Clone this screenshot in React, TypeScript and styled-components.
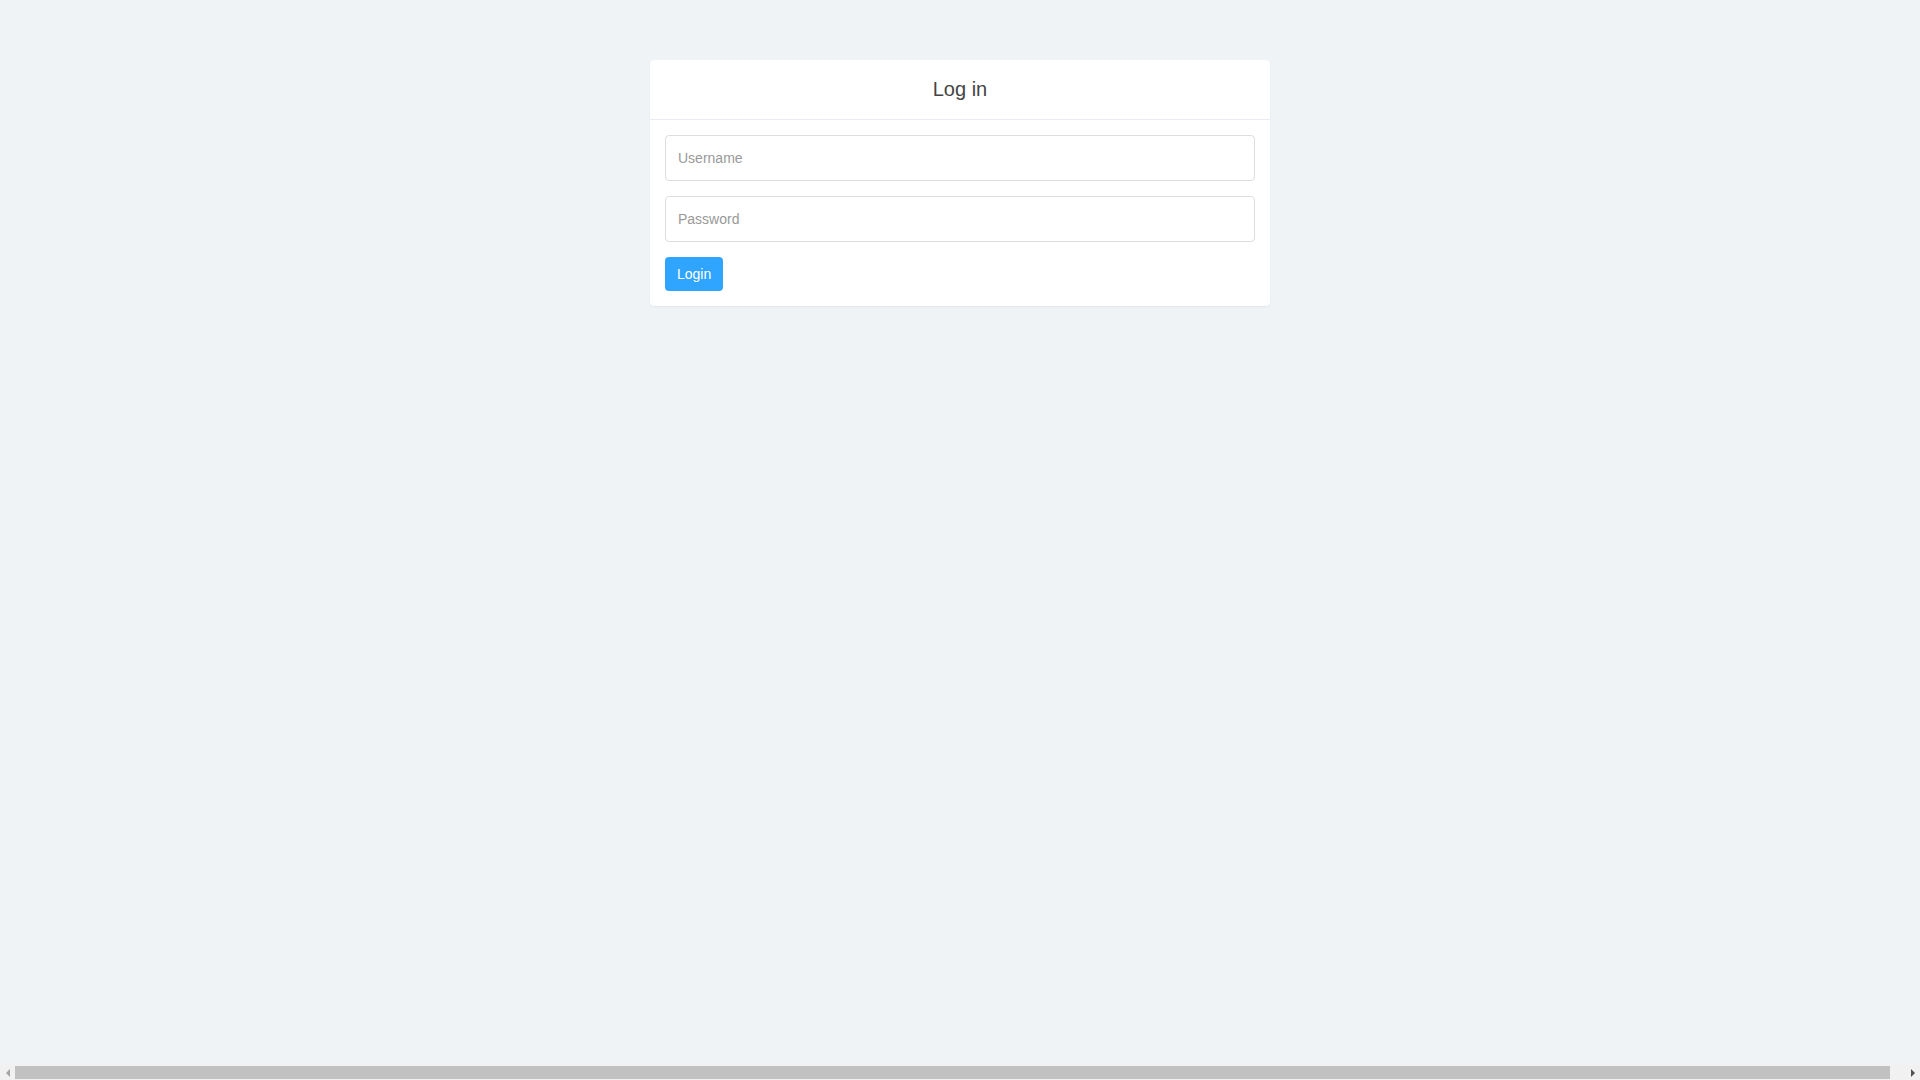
import React, { useState } from "react";
import styled, { createGlobalStyle } from "styled-components";

const GlobalStyle = createGlobalStyle`
  html, body {
    margin: 0;
    background-color: #eff3f6;
  }
  body {
    font-family: "Liberation Sans", Arial, sans-serif;
    font-size: 14px;
    color: #444;
  }
  * {
    box-sizing: border-box;
  }
`;

const Row = styled.div`
  display: flex;
  justify-content: center;
  padding: 60px 15px;
`;

const Panel = styled.div`
  width: 620px;
  background-color: #fff;
  border-radius: 4px;
  box-shadow: 0 1px 2px rgba(0, 0, 0, 0.06);
`;

const PanelHeading = styled.div`
  height: 60px;
  display: flex;
  align-items: center;
  justify-content: center;
  border-bottom: 1px solid #e9ecf2;
`;

const Title = styled.h1`
  margin: 0;
  font-size: 20px;
  font-weight: 400;
  color: #444;
`;

const PanelBody = styled.form`
  display: flex;
  flex-direction: column;
  align-items: flex-start;
  gap: 15px;
  padding: 15px;
`;

const Input = styled.input`
  width: 100%;
  height: 46px;
  padding: 0 12px;
  border: 1px solid #ddd;
  border-radius: 4px;
  font-family: inherit;
  font-size: 14px;
  color: #444;
  background-color: #fff;
  outline: none;

  &::placeholder {
    color: #999;
  }

  &:focus {
    border-color: #30a5ff;
  }
`;

const Button = styled.button`
  height: 34px;
  padding: 0 12px;
  border: none;
  border-radius: 4px;
  background-color: #30a5ff;
  color: #fff;
  font-family: inherit;
  font-size: 14px;
  cursor: pointer;

  &:hover {
    background-color: #1b9af7;
  }
`;

const ScrollBar = styled.div`
  position: fixed;
  left: 0;
  right: 0;
  bottom: 0;
  height: 15px;
  display: flex;
  align-items: stretch;
  background-color: #f1f1f1;
`;

const ScrollArrow = styled.div<{ $dir: "left" | "right"; $active?: boolean }>`
  width: 15px;
  display: flex;
  align-items: center;
  justify-content: center;

  &::before {
    content: "";
    width: 0;
    height: 0;
    border-top: 4px solid transparent;
    border-bottom: 4px solid transparent;
    ${(p) =>
      p.$dir === "left"
        ? `border-right: 4px solid ${p.$active ? "#505050" : "#a3a3a3"};`
        : `border-left: 4px solid ${p.$active ? "#505050" : "#a3a3a3"};`}
  }
`;

const ScrollThumb = styled.div`
  flex: 1;
  margin: 1px 15px 1px 0;
  background-color: #c1c1c1;
`;

const App: React.FC = () => {
  const [username, setUsername] = useState("");
  const [password, setPassword] = useState("");

  return (
    <>
      <GlobalStyle />
      <Row>
        <Panel>
          <PanelHeading>
            <Title>Log in</Title>
          </PanelHeading>
          <PanelBody onSubmit={(e) => e.preventDefault()}>
            <Input
              type="text"
              placeholder="Username"
              value={username}
              onChange={(e) => setUsername(e.target.value)}
            />
            <Input
              type="password"
              placeholder="Password"
              value={password}
              onChange={(e) => setPassword(e.target.value)}
            />
            <Button type="submit">Login</Button>
          </PanelBody>
        </Panel>
      </Row>
      <ScrollBar>
        <ScrollArrow $dir="left" />
        <ScrollThumb />
        <ScrollArrow $dir="right" $active />
      </ScrollBar>
    </>
  );
};

export default App;
